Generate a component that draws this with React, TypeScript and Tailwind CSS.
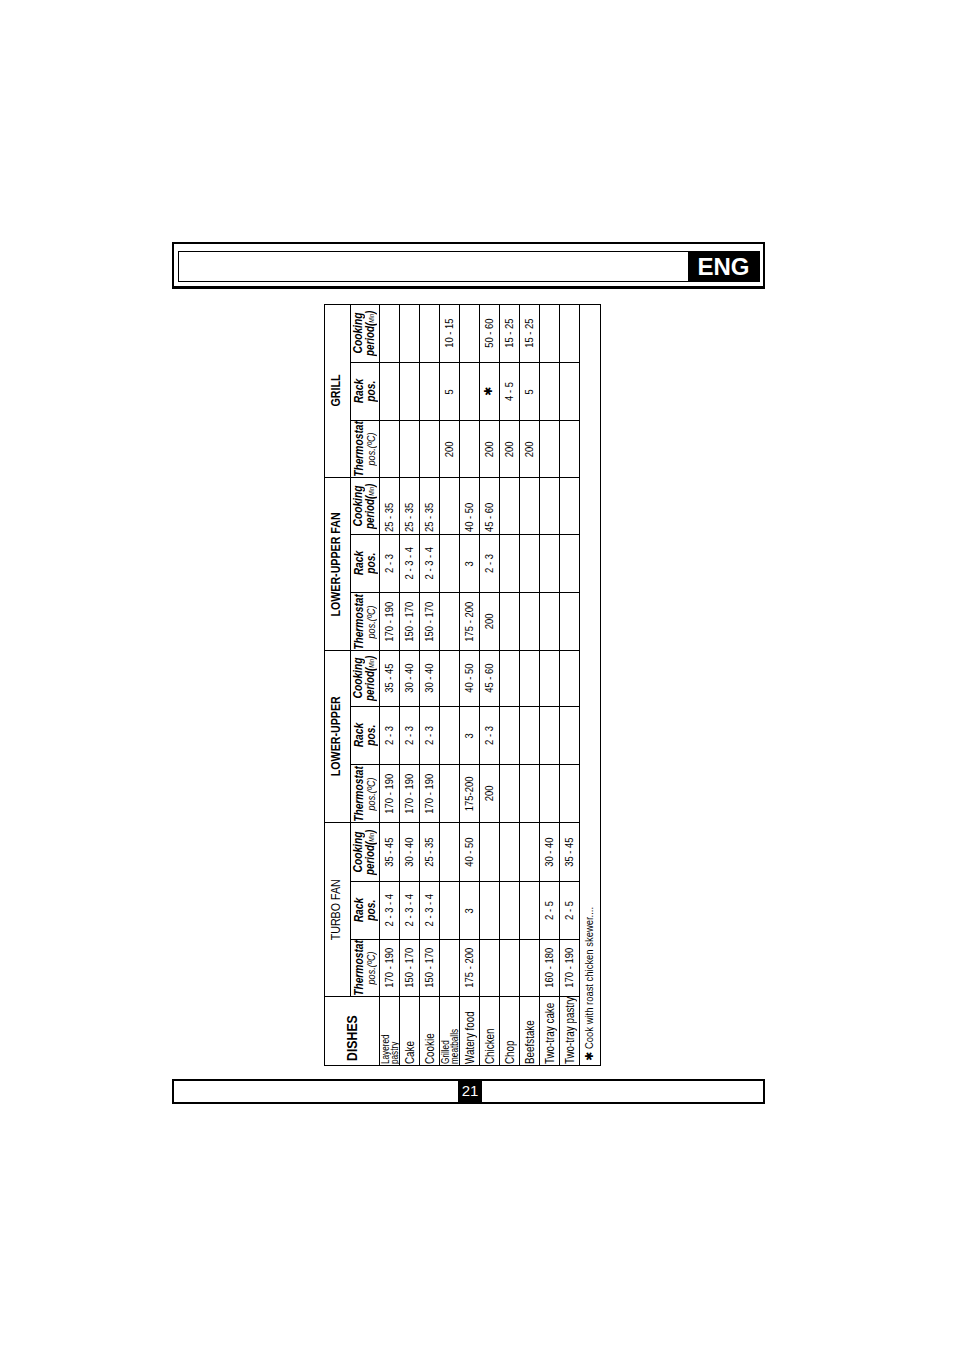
import type { ReactNode } from 'react'

// Baking chart page — the table is printed sideways, so it is built upright and turned -90°.
// No narrow face is installed, so text is squeezed horizontally to match Arial Narrow.

const groups = [
  { title: 'TURBO FAN', bold: false },
  { title: 'LOWER-UPPER', bold: true },
  { title: 'LOWER-UPPER FAN', bold: true },
  { title: 'GRILL', bold: true },
]

const STAR = '\u2731'

function N({ children, left, className = '' }: { children: ReactNode; left?: boolean; className?: string }) {
  return (
    <span className={`inline-block whitespace-nowrap scale-x-[0.82] ${left ? 'origin-left' : 'origin-center'} ${className}`}>
      {children}
    </span>
  )
}

const rows: { dish: ReactNode; vals: string[] }[] = [
  {
    dish: (
      <N left className="text-[10px] leading-[9px]">
        Layered
        <br />
        pastry
      </N>
    ),
    vals: ['170 - 190', '2 - 3 - 4', '35 - 45', '170 - 190', '2 - 3', '35 - 45', '170 - 190', '2 - 3', '25 - 35', '', '', ''],
  },
  { dish: <N left>Cake</N>, vals: ['150 - 170', '2 - 3 - 4', '30 - 40', '170 - 190', '2 - 3', '30 - 40', '150 - 170', '2 - 3 - 4', '25 - 35', '', '', ''] },
  { dish: <N left>Cookie</N>, vals: ['150 - 170', '2 - 3 - 4', '25 - 35', '170 - 190', '2 - 3', '30 - 40', '150 - 170', '2 - 3 - 4', '25 - 35', '', '', ''] },
  {
    dish: (
      <N left className="text-[10px] leading-[9px]">
        Grilled
        <br />
        meatballs
      </N>
    ),
    vals: ['', '', '', '', '', '', '', '', '', '200', '5', '10 - 15'],
  },
  { dish: <N left>Watery food</N>, vals: ['175 - 200', '3', '40 - 50', '175-200', '3', '40 - 50', '175 - 200', '3', '40 - 50', '', '', ''] },
  { dish: <N left>Chicken</N>, vals: ['', '', '', '200', '2 - 3', '45 - 60', '200', '2 - 3', '45 - 60', '200', STAR, '50 - 60'] },
  { dish: <N left>Chop</N>, vals: ['', '', '', '', '', '', '', '', '', '200', '4 - 5', '15 - 25'] },
  { dish: <N left>Beefstake</N>, vals: ['', '', '', '', '', '', '', '', '', '200', '5', '15 - 25'] },
  { dish: <N left>Two-tray cake</N>, vals: ['160 - 180', '2 - 5', '30 - 40', '', '', '', '', '', '', '', '', ''] },
  { dish: <N left>Two-tray pastry</N>, vals: ['170 - 190', '2 - 5', '35 - 45', '', '', '', '', '', '', '', '', ''] },
]

function SubHeads() {
  return (
    <>
      <div className="flex flex-col items-center justify-center bg-white leading-[12px]">
        <N className="text-[12.5px] font-bold italic">Thermostat</N>
        <N className="text-[11px] italic">pos.(ºC)</N>
      </div>
      <div className="flex flex-col items-center justify-center bg-white text-[12.5px] font-bold italic leading-[12px]">
        <N>Rack</N>
        <N>pos.</N>
      </div>
      <div className="flex flex-col items-center justify-center bg-white leading-[12px]">
        <N className="text-[12.5px] font-bold italic">Cooking</N>
        <N className="text-[12px] font-bold italic">
          period(<span className="text-[6.5px] font-normal">Min</span>)
        </N>
      </div>
    </>
  )
}

function Chart() {
  return (
    <div className="grid h-[277px] w-[762px] grid-cols-[68px_56px_57px_58px_57px_57px_55px_57px_57px_56px_56px_57px_57px] grid-rows-[25px_28px_repeat(10,19px)_20px] gap-px bg-black p-px text-black">
      <div className="row-span-2 flex items-center bg-white pl-[4px] text-[15px] font-bold">
        <N left>DISHES</N>
      </div>
      {groups.map((g) => (
        <div
          key={g.title}
          className={`col-span-3 flex items-center justify-center bg-white pb-[3px] text-[13px] ${g.bold ? 'font-bold' : ''}`}
        >
          <N>{g.title}</N>
        </div>
      ))}
      <SubHeads />
      <SubHeads />
      <SubHeads />
      <SubHeads />

      {rows.map((r, i) => (
        <div key={i} className="contents">
          <div className="flex items-center bg-white pl-[1px] text-[12px]">{r.dish}</div>
          {r.vals.map((v, j) => (
            <div
              key={j}
              className={`flex items-center bg-white text-[11.5px] ${j === 8 ? 'justify-start pl-[2px]' : 'justify-center'}`}
            >
              {v === STAR ? (
                <span className="font-['DejaVu_Sans',sans-serif] text-[11px] font-bold">{STAR}</span>
              ) : (
                v && <N left={j === 8}>{v}</N>
              )}
            </div>
          ))}
        </div>
      ))}

      <div className="col-span-13 flex items-center bg-white pl-[4px] text-[11.5px]">
        <span className="mr-[3px] font-['DejaVu_Sans',sans-serif] text-[11px] font-bold">{STAR}</span>
        <N left>Cook with roast chicken skewer....</N>
      </div>
    </div>
  )
}

export default function App() {
  return (
    <div className="h-[1350px] w-[954px] bg-white font-['Liberation_Sans',Arial,sans-serif] text-black">
      <div className="flex flex-col">
        {/* header band */}
        <div className="ml-[172px] mt-[242px] h-[47px] w-[593px] border-2 border-b-[3px] border-black pb-[4px] pl-[4px] pr-[3px] pt-[7px]">
          <div className="flex h-full justify-end border border-black">
            <div className="flex w-[71px] items-center justify-center bg-black text-[24px] font-bold leading-none text-white">
              ENG
            </div>
          </div>
        </div>

        {/* sideways chart */}
        <div className="relative ml-[324px] mt-[15px] h-[762px] w-[277px]">
          <div className="absolute left-0 top-0 origin-top-left translate-y-[762px] -rotate-90">
            <Chart />
          </div>
        </div>

        {/* footer band */}
        <div className="ml-[172px] mt-[13px] flex h-[25px] w-[593px] border-2 border-black pl-[284px]">
          <div className="flex w-[24px] items-center justify-center bg-black text-[15px] text-white">21</div>
        </div>
      </div>
    </div>
  )
}
